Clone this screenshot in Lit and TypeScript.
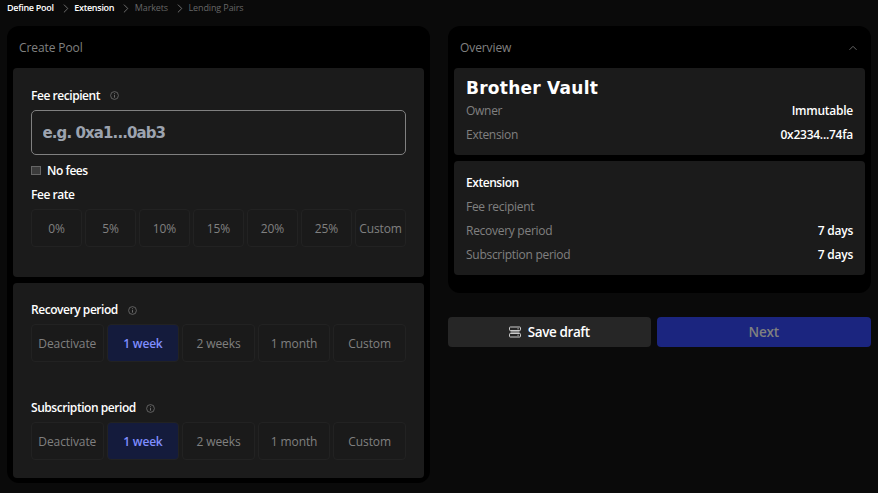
import { LitElement, html, css } from "lit";
import { customElement, property } from "lit/decorators.js";
import { classMap } from "lit/directives/class-map.js";

const infoIcon = html`<svg class="info" width="9" height="9" viewBox="0 0 9 9" fill="none" stroke="#777">
  <circle cx="4.5" cy="4.5" r="3.9" stroke-width="0.75"></circle>
  <path d="M4.5 4.1V6.6M4.5 2.3V3.2" stroke-width="0.9"></path>
</svg>`;

const chevronRight = html`<svg width="6" height="9" viewBox="0 0 6 9" fill="none" stroke="#777" stroke-width="0.9">
  <path d="M0.9 0.6L4.8 4.5L0.9 8.4"></path>
</svg>`;

@customElement("option-row")
export class OptionRow extends LitElement {
  @property({ attribute: false }) options: string[] = [];
  @property() selected = "";

  static styles = css`
    :host { display: flex; gap: 3px; height: 38px; }
    .option {
      flex: 1 1 0; min-width: 0; box-sizing: border-box; padding: 0;
      display: flex; align-items: center; justify-content: center;
      border: 1px solid #222; border-radius: 4px; background: #1a1a1a;
      color: #808080; font: 12px "Open Sans", sans-serif; letter-spacing: -0.1px; white-space: nowrap;
    }
    .chosen { background: #141b3c; color: #7f8dff; font-weight: 600; letter-spacing: -0.2px; }
  `;

  render() {
    return this.options.map(
      (o) => html`<button class=${classMap({ option: true, chosen: o === this.selected })}>${o}</button>`
    );
  }
}

@customElement("app-root")
export class AppRoot extends LitElement {
  static styles = css`
    :host {
      display: block; box-sizing: border-box; height: 493px; overflow: hidden;
      background: #0a0a0a; color: #fff; font: 12px/25px "Open Sans", sans-serif;
    }
    * { box-sizing: border-box; }
    .crumbs { display: flex; align-items: center; height: 16px; padding-left: 7px; font-size: 9px; line-height: 16px; }
    .crumbs svg { margin: 0 5.5px 0 9px; }
    .crumb { font-weight: 600; white-space: nowrap; letter-spacing: -0.28px; }
    .pending { color: #666; font-weight: 400; letter-spacing: -0.12px; }
    .columns { display: grid; grid-template-columns: 423px 423px; gap: 18px; padding: 10px 7px 0; align-items: start; }
    .panel { background: #000; border-radius: 12px; padding: 0 6px; }
    .create { height: 457px; }
    .overview { height: 267px; }
    .head { display: flex; align-items: center; justify-content: space-between; height: 42px; padding: 1px 7px 0 6px; color: #808080; letter-spacing: -0.1px; }
    .card { background: #1b1b1b; border-radius: 4px; }
    .fees { height: 208.5px; padding: 15px 18px 0; }
    .periods { height: 195.5px; margin-top: 6px; padding: 15px 18px 0; }
    .label { display: flex; align-items: center; gap: 10px; height: 24px; font-weight: 600; letter-spacing: -0.45px; white-space: nowrap; }
    .periods option-row { margin-top: 2.5px; }
    .periods .second { margin-top: 33.5px; }
    .info { margin-top: 1px; }
    .address {
      display: block; width: 100%; height: 45px; margin-top: 3px; padding: 0 10.5px;
      border: 1.5px solid #808080; border-radius: 5px; background: transparent; outline: none;
      color: #fff; font: bold 15px "DejaVu Sans", sans-serif; letter-spacing: -0.9px;
    }
    .address::placeholder { color: #9ca3af; opacity: 1; }
    .nofees { margin-top: 3px; gap: 6px; }
    .box { width: 10px; height: 9px; border: 1px solid #666; background: #3b3b3b; margin-top: 1px; }
    .fees option-row { margin-top: 3px; }
    .summary { height: 87px; padding: 6px 12px 0; }
    .name { height: 24px; font: bold 17px/28px "DejaVu Sans", sans-serif; letter-spacing: 0.25px; white-space: nowrap; }
    .line { display: flex; justify-content: space-between; height: 24px; }
    .key { color: #808080; letter-spacing: -0.28px; }
    .value { font-weight: 600; letter-spacing: -0.25px; }
    .details { height: 114px; margin-top: 6px; padding: 9px 12px 0; }
    .actions { display: grid; grid-template-columns: 202.5px 214.5px; gap: 6px; margin-top: 24px; }
    .action {
      display: flex; align-items: center; justify-content: center; gap: 7px; height: 30px; padding: 0;
      border: 0; border-radius: 4px; font: 600 13.5px "Open Sans", sans-serif; letter-spacing: -0.4px;
    }
    .draft { background: #262626; color: #fff; }
    .next { background: #1b257f; color: #808080; letter-spacing: -0.2px; }
  `;

  private crumb(text: string, pending = false) {
    return html`<span class=${classMap({ crumb: true, pending })}>${text}</span>`;
  }

  private line(key: string, value = "") {
    return html`<div class="line"><span class="key">${key}</span><span class="value">${value}</span></div>`;
  }

  render() {
    const periods = ["Deactivate", "1 week", "2 weeks", "1 month", "Custom"];
    return html`
      <nav class="crumbs">
        ${this.crumb("Define Pool")}${chevronRight}${this.crumb("Extension")}${chevronRight}
        ${this.crumb("Markets", true)}${chevronRight}${this.crumb("Lending Pairs", true)}
      </nav>
      <main class="columns">
        <section class="panel create">
          <div class="head"><span>Create Pool</span></div>
          <div class="card fees">
            <div class="label"><span>Fee recipient</span>${infoIcon}</div>
            <input class="address" placeholder="e.g. 0xa1...0ab3" />
            <div class="label nofees"><span class="box"></span><span>No fees</span></div>
            <div class="label"><span>Fee rate</span></div>
            <option-row .options=${["0%", "5%", "10%", "15%", "20%", "25%", "Custom"]}></option-row>
          </div>
          <div class="card periods">
            <div class="label"><span>Recovery period</span>${infoIcon}</div>
            <option-row .options=${periods} selected="1 week"></option-row>
            <div class="label second"><span>Subscription period</span>${infoIcon}</div>
            <option-row .options=${periods} selected="1 week"></option-row>
          </div>
        </section>
        <div>
          <section class="panel overview">
            <div class="head">
              <span>Overview</span>
              <svg width="10" height="8" viewBox="0 0 10 8" fill="none" stroke="#666" stroke-width="1"><path d="M1.5 5.8L5 2.3L8.5 5.8"></path></svg>
            </div>
            <div class="card summary">
              <div class="name">Brother Vault</div>
              ${this.line("Owner", "Immutable")}${this.line("Extension", "0x2334...74fa")}
            </div>
            <div class="card details">
              <div class="label">Extension</div>
              ${this.line("Fee recipient")}${this.line("Recovery period", "7 days")}${this.line("Subscription period", "7 days")}
            </div>
          </section>
          <div class="actions">
            <button class="action draft">
              <svg width="12" height="12" viewBox="0 0 12 12" fill="none" stroke="#ccc" stroke-width="1">
                <rect x="0.5" y="1" width="11" height="3.5" rx="0.7"></rect>
                <rect x="0.5" y="7.5" width="11" height="3.5" rx="0.7"></rect>
                <path d="M1.5 6H10.5" stroke="#888" stroke-width="2"></path>
                <path d="M8.5 2.8H9.7M8.5 9.2H9.7"></path>
              </svg>
              <span>Save draft</span>
            </button>
            <button class="action next">Next</button>
          </div>
        </div>
      </main>
    `;
  }
}
